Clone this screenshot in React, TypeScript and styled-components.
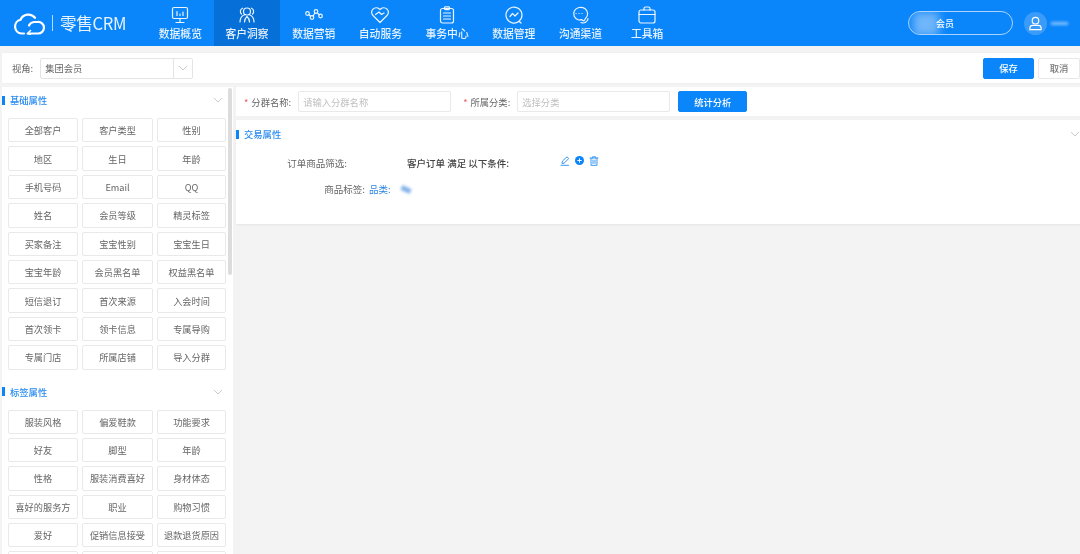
import { ReactNode } from 'react';
import styled, { createGlobalStyle } from 'styled-components';

const GlobalStyle = createGlobalStyle`
  html, body {
    margin: 0;
    padding: 0;
    height: 100%;
    overflow: hidden;
    background: #f3f3f3;
  }
  * {
    box-sizing: border-box;
  }
`;

const Page = styled.div`
  width: 1080px;
  height: 554px;
  overflow: hidden;
  display: flex;
  flex-direction: column;
  background: #f3f3f3;
  font-family: 'Noto Sans CJK SC', 'Liberation Sans', sans-serif;
  font-size: 10px;
  color: #666;
  filter: blur(0.45px);
`;

const Header = styled.header`
  height: 46px;
  flex: none;
  display: flex;
  align-items: stretch;
  background: #0a85fa;
  color: #fff;
`;

const Brand = styled.div`
  width: 147px;
  flex: none;
  display: flex;
  align-items: center;
  padding-left: 13px;
`;

const BrandDivider = styled.span`
  width: 1px;
  height: 16px;
  margin: 0 7px 0 6px;
  background: rgba(255, 255, 255, 0.7);
`;

const BrandName = styled.span`
  font-size: 16.6px;
  letter-spacing: -0.3px;
  color: rgba(255, 255, 255, 0.9);
`;

const Nav = styled.nav`
  display: flex;
`;

const NavItem = styled.div<{ $active?: boolean }>`
  width: 66.7px;
  display: flex;
  flex-direction: column;
  align-items: center;
  padding-top: 5px;
  font-size: 10.8px;
  font-weight: 500;
  line-height: 15px;
  color: rgba(255, 255, 255, 0.9);
  background: ${({ $active }) => ($active ? '#0670d8' : 'transparent')};
`;

const NavIcon = styled.svg`
  width: 20px;
  height: 20px;
  margin-bottom: 1px;
  fill: none;
  stroke: rgba(255, 255, 255, 0.92);
  stroke-width: 1.2;
  stroke-linecap: round;
  stroke-linejoin: round;
`;

const HeaderRight = styled.div`
  margin-left: auto;
  display: flex;
  align-items: center;
  width: 172px;
  flex: none;
`;

const MemberPill = styled.div`
  position: relative;
  width: 105px;
  height: 24px;
  margin-right: 11px;
  padding-left: 27px;
  display: flex;
  align-items: center;
  border: 1px solid rgba(255, 255, 255, 0.65);
  border-radius: 12px;
  font-size: 9px;
  font-weight: 500;
  overflow: hidden;
`;

const PillSmear = styled.span`
  position: absolute;
  left: 4px;
  top: 0;
  width: 26px;
  height: 24px;
  background: rgba(130, 190, 250, 0.85);
  filter: blur(4px);
`;

const PillText = styled.span`
  position: relative;
`;

const Avatar = styled.div`
  width: 23px;
  height: 23px;
  flex: none;
  display: flex;
  align-items: center;
  justify-content: center;
  border-radius: 50%;
  background: #3a9cf8;
`;

const NameSmear = styled.span`
  width: 17px;
  height: 3px;
  margin-left: 4px;
  background: rgba(255, 255, 255, 0.5);
  filter: blur(1.5px);
`;

const Toolbar = styled.div`
  height: 30px;
  flex: none;
  margin: 7px 0 4px 2px;
  padding-left: 10px;
  display: flex;
  align-items: center;
  background: #fff;
  box-shadow: 0 0 2px rgba(0, 0, 0, 0.04);
`;

const ToolbarLabel = styled.span`
  font-size: 9.3px;
  margin-right: 7px;
`;

const ViewSelect = styled.div`
  width: 153px;
  height: 21px;
  display: flex;
  align-items: center;
  border: 1px solid #e4e4e4;
  border-radius: 2px;
  font-size: 9.3px;
  color: #666;
`;

const ViewValue = styled.span`
  flex: 1;
  padding-left: 4px;
`;

const ViewArrow = styled.span`
  width: 19px;
  height: 100%;
  display: flex;
  align-items: center;
  justify-content: center;
  border-left: 1px solid #e4e4e4;
`;

const ToolbarActions = styled.div`
  margin-left: auto;
  display: flex;
  gap: 4px;
`;

const Button = styled.button<{ $ghost?: boolean; $width: number }>`
  width: ${({ $width }) => $width}px;
  height: 21px;
  padding: 0;
  border-radius: 2px;
  border: 1px solid ${({ $ghost }) => ($ghost ? '#e8e8e8' : '#0a85fa')};
  background: ${({ $ghost }) => ($ghost ? '#fff' : '#0a85fa')};
  color: ${({ $ghost }) => ($ghost ? '#777' : '#fff')};
  font-family: inherit;
  font-size: 9.3px;
  font-weight: 500;
`;

const Body = styled.div`
  flex: 1;
  min-height: 0;
  display: flex;
  gap: 3px;
  padding-left: 2px;
`;

const Sidebar = styled.aside`
  position: relative;
  width: 231px;
  flex: none;
  padding: 3px 0 0 6px;
  background: #fff;
`;

const Scrollbar = styled.span`
  position: absolute;
  top: 1px;
  right: 1px;
  width: 4px;
  height: 187px;
  border-radius: 2px;
  background: #dcdcdc;
`;

const SectionHead = styled.div`
  height: 20px;
  margin-left: -6px;
  padding-right: 10px;
  display: flex;
  align-items: center;
  justify-content: space-between;
`;

const SectionTitle = styled.span`
  display: flex;
  align-items: center;
  gap: 5px;
  font-size: 9.3px;
  font-weight: 500;
  color: #2a8cf0;

  &::before {
    content: '';
    width: 3px;
    height: 9px;
    background: #0a85fa;
  }
`;

const TagGrid = styled.div`
  display: grid;
  grid-template-columns: 70px 71px 69px;
  grid-auto-rows: 24.4px;
  gap: 4px;
  margin-top: 8px;
`;

const Tag = styled.div`
  display: flex;
  align-items: center;
  justify-content: center;
  border: 1px solid #e9e9e9;
  border-radius: 2px;
  background: #fff;
  font-size: 9.2px;
  color: #666;
  white-space: nowrap;
`;

const Spaced = styled.div`
  margin-top: 12px;
`;

const Main = styled.main`
  flex: 1;
  min-width: 0;
  display: flex;
  flex-direction: column;
  gap: 4px;
`;

const FieldLabel = styled.span`
  font-size: 9.3px;
  white-space: nowrap;

  &::before {
    content: '*';
    margin-right: 3px;
    color: #f15a5a;
  }
`;

const Input = styled.div<{ $width: number }>`
  width: ${({ $width }) => $width}px;
  height: 21px;
  margin-left: 7px;
  padding-left: 4px;
  display: flex;
  align-items: center;
  border: 1px solid #e9e9e9;
  border-radius: 2px;
  font-size: 9.3px;
  color: #c0c0c0;
`;

const FilterBar = styled.div`
  height: 29px;
  flex: none;
  padding-left: 8px;
  display: flex;
  align-items: center;
  background: #fff;

  ${Input} + ${FieldLabel} {
    margin-left: 12px;
  }

  ${Input} + button {
    margin-left: 8px;
  }
`;

const Card = styled.section`
  height: 104px;
  flex: none;
  padding: 4px 0 0;
  background: #fff;
  box-shadow: 0 1px 2px rgba(0, 0, 0, 0.06);
`;

const CardHead = styled(SectionHead)`
  margin-left: 0;
  padding-right: 0;
`;

const ConditionRow = styled.div`
  height: 18px;
  margin-top: 10px;
  display: flex;
  align-items: center;
  font-size: 9.5px;
`;

const RowLabel = styled.span<{ $width: number }>`
  width: ${({ $width }) => $width}px;
  text-align: right;
  flex: none;
`;

const RuleText = styled.span`
  margin-left: 60px;
  width: 153px;
  flex: none;
  font-weight: 500;
  color: #444;
`;

const RowIcons = styled.span`
  display: flex;
  align-items: center;
  gap: 5px;
  margin-top: -5px;
`;

const SmallIcon = styled.svg`
  width: 10px;
  height: 10px;
  fill: none;
  stroke: #3a97ee;
  stroke-width: 1;
  stroke-linecap: round;
  stroke-linejoin: round;
`;

const TagRow = styled(ConditionRow)`
  margin-top: 8px;
`;

const LinkText = styled.span`
  margin-left: 4px;
  color: #2f86e0;
`;

const ValueSmear = styled.span`
  width: 10px;
  height: 5px;
  margin-left: 10px;
  background: #7fb0e8;
  filter: blur(1.5px);
  transform: rotate(25deg);
`;

const Chevron = () => (
  <svg width="10" height="6" viewBox="0 0 10 6" fill="none" stroke="#c4c4c4" strokeWidth="0.9">
    <path d="M1 1l4 4 4-4" />
  </svg>
);

const Logo = () => (
  <svg width="33" height="24" viewBox="0 0 33 24" fill="none" stroke="#fff" strokeWidth="2.2" strokeLinecap="round">
    <path d="M11 22.5H8.5a7 7 0 0 1-1-13.8A8.5 8.5 0 0 1 22 6.8" />
    <path d="M16 14.5a6 6 0 0 1 5-3.5h3.5a5.8 5.8 0 0 1 6.500 5.800a5.800 5.800 0 0 1-6 5.700H15" />
    <path d="M17.500 19.500l-3 3 3 .8" strokeWidth="1.500" />
  </svg>
);

const navItems: { label: string; active?: boolean; icon: ReactNode }[] = [
  {
    label: '数据概览',
    icon: (
      <>
        <rect x="2.500" y="2.500" width="15" height="11" rx="1.500" />
        <path d="M7 6.500v4M10 9v1.500M13 7v3.500M10 13.500V17M6 17.500h8" />
      </>
    ),
  },
  {
    label: '客户洞察',
    active: true,
    icon: (
      <>
        <circle cx="10" cy="6.500" r="3.500" />
        <path d="M3 17c0-4 2-6.500 5-7.500M17 17c0-4-2-6.500-5-7.500M7.500 17c0-2 .8-4 2.500-5.500 1.700 1.500 2.500 3.500 2.500 5.500" />
        <path d="M5.500 3.200A3.500 3.500 0 0 0 4.500 9M14.500 3.200A3.500 3.500 0 0 1 15.500 9" />
      </>
    ),
  },
  {
    label: '数据营销',
    icon: (
      <>
        <circle cx="3.500" cy="8.500" r="1.800" />
        <circle cx="8" cy="12.500" r="1.800" />
        <circle cx="12" cy="6.500" r="1.800" />
        <circle cx="16.500" cy="11" r="1.800" />
        <path d="M5 9.800l1.600 1.400M9 11l2-3M13.300 7.800l1.900 2" />
      </>
    ),
  },
  {
    label: '自动服务',
    icon: (
      <>
        <path d="M10 17.500L3 10.500a4.700 4.700 0 0 1 0-6.300 4.600 4.600 0 0 1 6.300-.2l.7.600.7-.6a4.600 4.600 0 0 1 6.300.2 4.700 4.700 0 0 1 0 6.300z" />
        <path d="M5.500 9.500L9 7l2.500 2.500L14 8" />
      </>
    ),
  },
  {
    label: '事务中心',
    icon: (
      <>
        <rect x="3.500" y="3.500" width="13" height="14.500" rx="2" />
        <rect x="7.500" y="1.800" width="5" height="2.800" rx="0.800" />
        <path d="M6.500 8h7M6.500 11h7M6.500 14h7" />
      </>
    ),
  },
  {
    label: '数据管理',
    icon: (
      <>
        <path d="M15 16.300A8 8 0 1 1 18 10a8 8 0 0 1-3 6.300l2 1.700" />
        <path d="M6 11.500l2.500-3 2.500 2.500 3-3" />
      </>
    ),
  },
  {
    label: '沟通渠道',
    icon: (
      <>
        <path d="M15.500 13.500A7 6.500 0 1 0 8.500 15c1 0 2 0 2.800-.4l2.700 1.400z" />
        <path d="M6 8.500h.1M9 8.500h.1M12 8.500h.1" />
        <path d="M11 17.500c2 .8 4.500.5 6-1.500.7-.9 1-1.800 1-2.500" />
      </>
    ),
  },
  {
    label: '工具箱',
    icon: (
      <>
        <rect x="2" y="5" width="16" height="13" rx="2" />
        <path d="M7 5V3.500A1.500 1.500 0 0 1 8.500 2h3A1.500 1.500 0 0 1 13 3.500V5M2 9.500h16" />
      </>
    ),
  },
];

const basicTags = [
  '全部客户', '客户类型', '性别',
  '地区', '生日', '年龄',
  '手机号码', 'Email', 'QQ',
  '姓名', '会员等级', '精灵标签',
  '买家备注', '宝宝性别', '宝宝生日',
  '宝宝年龄', '会员黑名单', '权益黑名单',
  '短信退订', '首次来源', '入会时间',
  '首次领卡', '领卡信息', '专属导购',
  '专属门店', '所属店铺', '导入分群',
];

const labelTags = [
  '服装风格', '偏爱鞋款', '功能要求',
  '好友', '脚型', '年龄',
  '性格', '服装消费喜好', '身材体态',
  '喜好的服务方', '职业', '购物习惯',
  '爱好', '促销信息接受', '退款退货原因',
  '', '', '',
];

export default function App() {
  return (
    <Page>
      <GlobalStyle />
      <Header>
        <Brand>
          <Logo />
          <BrandDivider />
          <BrandName>零售CRM</BrandName>
        </Brand>
        <Nav>
          {navItems.map((item) => (
            <NavItem key={item.label} $active={item.active}>
              <NavIcon viewBox="0 0 20 20">{item.icon}</NavIcon>
              {item.label}
            </NavItem>
          ))}
        </Nav>
        <HeaderRight>
          <MemberPill>
            <PillSmear />
            <PillText>会员</PillText>
          </MemberPill>
          <Avatar>
            <svg width="15" height="15" viewBox="0 0 16 16" fill="none" stroke="#fff" strokeWidth="1.200">
              <circle cx="8" cy="5" r="3.500" />
              <path d="M2 14.500v-1.500a3 3 0 0 1 3-3h6a3 3 0 0 1 3 3v1.500z" />
            </svg>
          </Avatar>
          <NameSmear />
        </HeaderRight>
      </Header>

      <Toolbar>
        <ToolbarLabel>视角:</ToolbarLabel>
        <ViewSelect>
          <ViewValue>集团会员</ViewValue>
          <ViewArrow>
            <Chevron />
          </ViewArrow>
        </ViewSelect>
        <ToolbarActions>
          <Button $width={51}>保存</Button>
          <Button $ghost $width={42}>取消</Button>
        </ToolbarActions>
      </Toolbar>

      <Body>
        <Sidebar>
          <Scrollbar />
          <SectionHead>
            <SectionTitle>基础属性</SectionTitle>
            <Chevron />
          </SectionHead>
          <TagGrid>
            {basicTags.map((tag) => (
              <Tag key={tag}>{tag}</Tag>
            ))}
          </TagGrid>
          <Spaced>
            <SectionHead>
              <SectionTitle>标签属性</SectionTitle>
              <Chevron />
            </SectionHead>
            <TagGrid>
              {labelTags.map((tag, i) => (
                <Tag key={i}>{tag}</Tag>
              ))}
            </TagGrid>
          </Spaced>
        </Sidebar>

        <Main>
          <FilterBar>
            <FieldLabel>分群名称:</FieldLabel>
            <Input $width={153}>请输入分群名称</Input>
            <FieldLabel>所属分类:</FieldLabel>
            <Input $width={153}>选择分类</Input>
            <Button $width={69}>统计分析</Button>
          </FilterBar>
          <Card>
            <CardHead>
              <SectionTitle>交易属性</SectionTitle>
              <Chevron />
            </CardHead>
            <ConditionRow>
              <RowLabel $width={111}>订单商品筛选:</RowLabel>
              <RuleText>客户订单 满足 以下条件:</RuleText>
              <RowIcons>
                <SmallIcon viewBox="0 0 10 10">
                  <path d="M2 7l.5-2L7 .8 8.800 2.500 4.300 7zM1 9.300h7.500" />
                </SmallIcon>
                <svg width="9" height="9" viewBox="0 0 10 10">
                  <circle cx="5" cy="5" r="5" fill="#0a85fa" />
                  <path d="M2.500 5h5M5 2.500v5" stroke="#fff" strokeWidth="1" />
                </svg>
                <SmallIcon viewBox="0 0 10 10">
                  <path d="M1 2h8M3.500 2V.8h3V2M2 2v7.300h6V2M4 4v3.500M6 4v3.500" />
                </SmallIcon>
              </RowIcons>
            </ConditionRow>
            <TagRow>
              <RowLabel $width={129}>商品标签:</RowLabel>
              <LinkText>品类:</LinkText>
              <ValueSmear />
            </TagRow>
          </Card>
        </Main>
      </Body>
    </Page>
  );
}
